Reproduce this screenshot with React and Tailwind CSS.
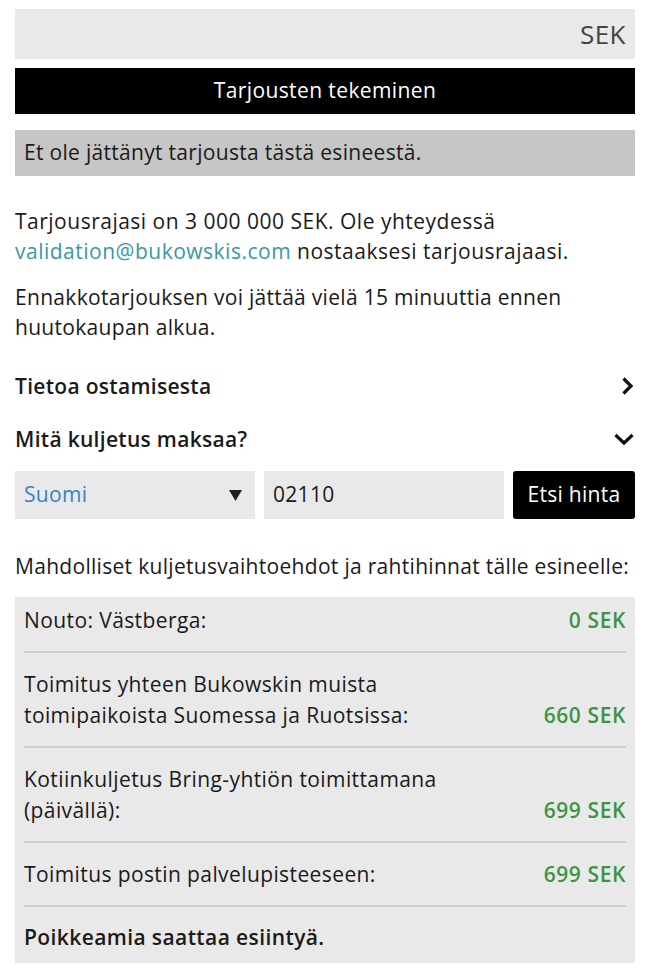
import React from 'react'

const rows = [
  { label: ['Nouto: Västberga:'], price: '0 SEK', first: true },
  { label: ['Toimitus yhteen Bukowskin muista', 'toimipaikoista Suomessa ja Ruotsissa:'], price: '660 SEK' },
  { label: ['Kotiinkuljetus Bring-yhtiön toimittamana', '(päivällä):'], price: '699 SEK' },
  { label: ['Toimitus postin palvelupisteeseen:'], price: '699 SEK' },
]

const App = () => {
  return (
    <div className="bg-white px-[15px] pt-[9px] text-[21px] tracking-[0.3px] text-[#1a1a1a]" style={{ fontFamily: '"Open Sans", "Noto Sans", sans-serif' }}>
      <div className="flex h-[50px] items-center justify-end bg-[#e9e9e9] px-[9px] text-[26px] tracking-[0.5px] text-[#444]">SEK</div>

      <button className="mt-[9px] flex h-[46px] w-full items-center justify-center bg-black text-[21px] tracking-[0.4px] text-white">
        Tarjousten tekeminen
      </button>

      <div className="mt-[16px] flex h-[46px] items-center bg-[#c6c6c6] px-[9px]">Et ole jättänyt tarjousta tästä esineestä.</div>

      <p className="mt-[30px] leading-[30px] tracking-[0.5px]">
        Tarjousrajasi on 3 000 000 SEK. Ole yhteydessä{' '}
        <a className="text-[#3a98a4]">validation@bukowskis.com</a> nostaaksesi tarjousrajaasi.
      </p>
      <p className="mt-[16px] leading-[30px]">Ennakkotarjouksen voi jättää vielä 15 minuuttia ennen huutokaupan alkua.</p>

      <div className="mt-[29px] flex items-center justify-between font-semibold leading-[30px]">
        <span>Tietoa ostamisesta</span>
        <svg width="13" height="18" viewBox="0 0 13 18" className="mr-[1px]">
          <path d="M2.5 1.5l7.5 7.5-7.5 7.5" fill="none" stroke="#111" strokeWidth="3.2" />
        </svg>
      </div>
      <div className="mt-[23px] flex items-center justify-between font-semibold leading-[30px]">
        <span>Mitä kuljetus maksaa?</span>
        <svg width="20" height="13" viewBox="0 0 20 13" className="mr-[1px]">
          <path d="M1.5 2l8.5 8 8.5-8" fill="none" stroke="#111" strokeWidth="3.2" />
        </svg>
      </div>

      <div className="mt-[17px] flex h-[48px] gap-[9px]">
        <div className="flex w-[240px] items-center justify-between bg-[#e9e9e9] px-[9px] text-[#3a80c6]">
          <span>Suomi</span>
          <svg width="13" height="11" viewBox="0 0 13 11" className="mr-[4px]">
            <path d="M0 0h13L6.5 11z" fill="#222" />
          </svg>
        </div>
        <div className="flex flex-1 items-center bg-[#e9e9e9] px-[9px]">02110</div>
        <button className="w-[122px] rounded-[3px] bg-black text-white">Etsi hinta</button>
      </div>

      <p className="mt-[32px] whitespace-nowrap text-[21px] leading-[30px] tracking-[0.3px]">Mahdolliset kuljetusvaihtoehdot ja rahtihinnat tälle esineelle:</p>

      <div className="mt-[16px] bg-[#e9e9e9] px-[9px] tracking-[0.4px]">
        {rows.map((r) => (
          <div
            key={r.price + r.label[0]}
            className={`flex items-end justify-between border-b-2 border-[#cfcfcf] pb-[15px] leading-[31px] ${r.first ? 'pt-[8px]' : 'pt-[16px]'}`}
          >
            <div>
              {r.label.map((l) => (
                <div key={l}>{l}</div>
              ))}
            </div>
            <span className="font-semibold tracking-[0.6px] text-[#3f9444]">{r.price}</span>
          </div>
        ))}
        <div className="pb-[10px] pt-[15px] font-semibold leading-[31px]">Poikkeamia saattaa esiintyä.</div>
      </div>
      <div className="h-[14px]" />
    </div>
  )
}

export default App
